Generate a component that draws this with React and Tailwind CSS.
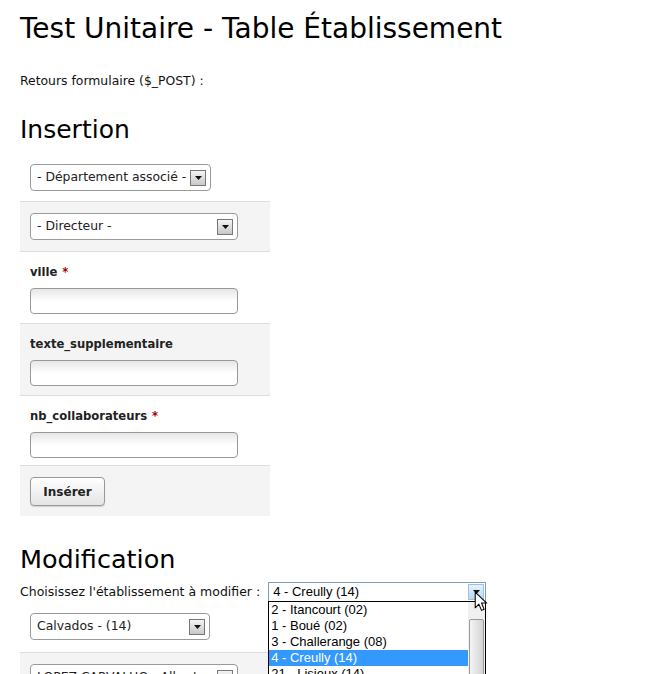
import React from 'react';

const sans = { fontFamily: '"DejaVu Sans", Verdana, sans-serif' };

function ArrowBox() {
  return (
    <span className="flex h-[16px] w-[16px] shrink-0 items-center justify-center border border-[#777] bg-gradient-to-b from-[#f4f4f4] to-[#c8c8c8]">
      <svg width="7" height="4" viewBox="0 0 7 4">
        <path d="M0 0h7L3.5 4z" fill="#111" />
      </svg>
    </span>
  );
}

function FakeSelect({ label, width }) {
  return (
    <div
      className={`flex h-[27px] items-center justify-between gap-[1px] rounded-[4px] border border-[#9a9a9a] bg-white pl-[6px] pr-[4px] text-[12.4px] text-[#222] ${width}`}
    >
      <span className="overflow-hidden whitespace-nowrap">{label}</span>
      <ArrowBox />
    </div>
  );
}

function TextInput() {
  return (
    <div className="h-[26px] w-[208px] rounded-[4px] border border-[#999] bg-gradient-to-b from-[#e6e6e6] via-white to-white" />
  );
}

function Label({ children, required }) {
  return (
    <div className="mb-[8px] text-[11.6px] font-bold leading-[16px] text-[#222]">
      {children}
      {required && <span className="ml-[5px] text-[#a40000]">*</span>}
    </div>
  );
}

// Windows-style open dropdown
function OpenSelect() {
  const options = [
    '2 - Itancourt (02)',
    '1 - Boué (02)',
    '3 - Challerange (08)',
    '4 - Creully (14)',
    '21 - Lisieux (14)',
  ];
  return (
    <div className="relative" style={{ fontFamily: '"Liberation Sans", Arial, sans-serif' }}>
      <div className="flex h-[20px] w-[218px] items-center justify-between border border-[#7f9db9] bg-white pl-[4px] text-[13px] text-black">
        <span>4 - Creully (14)</span>
        <span className="mr-[1px] flex h-[16px] w-[16px] items-center justify-center border border-[#9cc0e6] bg-gradient-to-b from-[#e6f2fc] to-[#b8d8f5]">
          <svg width="7" height="4" viewBox="0 0 7 4">
            <path d="M0 0h7L3.5 4z" fill="#111" />
          </svg>
        </span>
      </div>
      <div className="absolute left-0 top-[19px] z-10 flex h-[90px] w-[218px] overflow-hidden border border-black bg-white text-[13px] text-black">
        <div className="flex-1">
          {options.map((o, i) => (
            <div
              key={o}
              className={`h-[16px] pl-[2px] leading-[16px] ${i === 3 ? 'bg-[#3399ff] text-white' : ''}`}
            >
              {o}
            </div>
          ))}
        </div>
        <div className="flex w-[17px] flex-col bg-[#f0f0f0]">
          <div className="h-[19px]" />
          <div className="mx-[1px] h-[80px] rounded-[2px] border border-[#999] bg-gradient-to-r from-[#f4f4f4] to-[#d4d4d4]" />
        </div>
      </div>
      <svg className="absolute left-[206px] top-[9px] z-20" width="15" height="22" viewBox="0 0 14 21">
        <path d="M1 1v15l3.5-3.5 2.5 6 2.5-1-2.5-6H12z" fill="#fff" stroke="#000" strokeWidth="1" strokeLinejoin="round" />
      </svg>
    </div>
  );
}

export default function App() {
  return (
    <div className="min-h-screen bg-white pl-[20px] text-[#111]" style={sans}>
      <h1 className="pt-[13px] text-[28px] font-normal leading-[32px] text-black">
        Test Unitaire - Table Établissement
      </h1>
      <p className="mt-[29px] text-[12.4px] leading-[14px]">Retours formulaire ($_POST) :</p>

      <h2 className="mt-[27px] text-[25px] leading-[30px] text-black">Insertion</h2>

      <div className="mt-[10px] w-[250px]">
        <div className="h-[46px] px-[10px] pt-[9px]">
          <FakeSelect label="- Département associé -" width="w-[181px]" />
        </div>
        <div className="h-[50px] border-t border-[#ddd] bg-[#f4f4f4] px-[10px] pt-[11px]">
          <FakeSelect label="- Directeur -" width="w-[208px]" />
        </div>
        <div className="h-[72px] border-t border-[#ddd] px-[10px] pt-[12px]">
          <Label required>ville</Label>
          <TextInput />
        </div>
        <div className="h-[72px] border-t border-[#ddd] bg-[#f4f4f4] px-[10px] pt-[12px]">
          <Label>texte_supplementaire</Label>
          <TextInput />
        </div>
        <div className="h-[70px] border-t border-[#ddd] px-[10px] pt-[12px]">
          <Label required>nb_collaborateurs</Label>
          <TextInput />
        </div>
        <div className="h-[51px] border-t border-[#ddd] bg-[#f4f4f4] px-[10px] pt-[11px]">
          <button className="h-[29px] w-[75px] rounded-[4px] border border-[#999] bg-gradient-to-b from-white to-[#e4e4e4] text-[12px] font-bold text-[#222] shadow-[0_1px_1px_rgba(0,0,0,0.15)]">
            Insérer
          </button>
        </div>
      </div>

      <h2 className="mt-[28px] text-[25.5px] leading-[30px] text-black">Modification</h2>
      <div className="mt-[8px] flex items-center gap-[8px]">
        <span className="text-[12.5px]">Choisissez l'établissement à modifier :</span>
        <OpenSelect />
      </div>

      <div className="mt-[10px] w-[250px]">
        <div className="h-[40px] px-[10px] pt-[1px]">
          <FakeSelect label="Calvados - (14)" width="w-[180px]" />
        </div>
        <div className="h-[50px] border-t border-[#ddd] bg-[#f4f4f4] px-[10px] pt-[11px]">
          <FakeSelect label="LOPEZ CARVALHO - Alberto" width="w-[208px]" />
        </div>
      </div>
    </div>
  );
}
